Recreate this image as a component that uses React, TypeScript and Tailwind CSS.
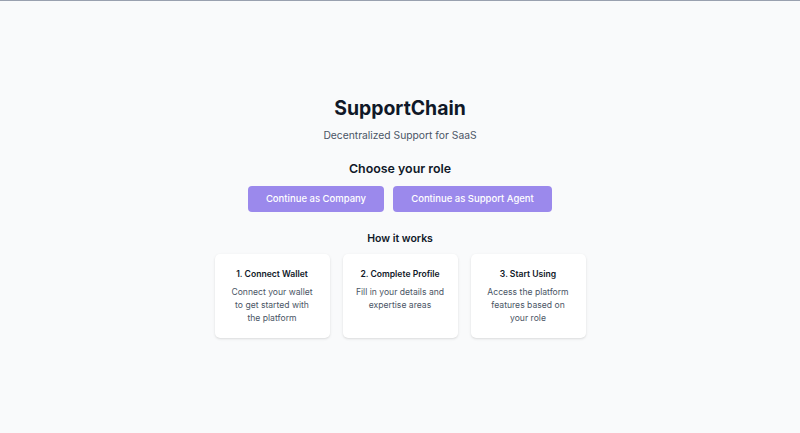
export default function App() {
  const steps = [
    { title: "1. Connect Wallet", text: "Connect your wallet to get started with the platform" },
    { title: "2. Complete Profile", text: "Fill in your details and expertise areas" },
    { title: "3. Start Using", text: "Access the platform features based on your role" },
  ];

  return (
    <div
      className="min-h-screen bg-gray-50 border-t border-gray-400 flex items-center justify-center"
      style={{ fontFamily: "Inter, 'Noto Sans', sans-serif" }}
    >
      <div className="flex flex-col items-center text-center">
        <h1 className="text-[19.4px] leading-[24px] font-bold text-gray-900">SupportChain</h1>
        <p className="mt-[7px] text-[10.3px] leading-[16px] text-gray-600">Decentralized Support for SaaS</p>

        <h2 className="mt-[17px] text-[12.4px] leading-[18px] font-semibold text-gray-900">Choose your role</h2>
        <div className="mt-[8px] flex gap-[9px]">
          <button className="w-[136px] h-[26px] rounded-[4px] bg-[#9b89ec] text-white text-[9.5px] font-medium">
            Continue as Company
          </button>
          <button className="w-[159px] h-[26px] rounded-[4px] bg-[#9b89ec] text-white text-[9.5px] font-medium">
            Continue as Support Agent
          </button>
        </div>

        <h3 className="mt-[19px] text-[10.5px] leading-[16px] font-semibold text-gray-900">How it works</h3>
        <div className="mt-[7px] grid grid-cols-3 gap-[13px]">
          {steps.map((s) => (
            <div key={s.title} className="w-[115px] h-[84px] bg-white rounded-[5px] shadow-sm px-[13px] pt-[14px]">
              <p className="text-[8.6px] leading-[12px] font-semibold text-gray-900">{s.title}</p>
              <p className="mt-[6px] text-[8.6px] leading-[13px] text-gray-600">{s.text}</p>
            </div>
          ))}
        </div>
      </div>
    </div>
  );
}
